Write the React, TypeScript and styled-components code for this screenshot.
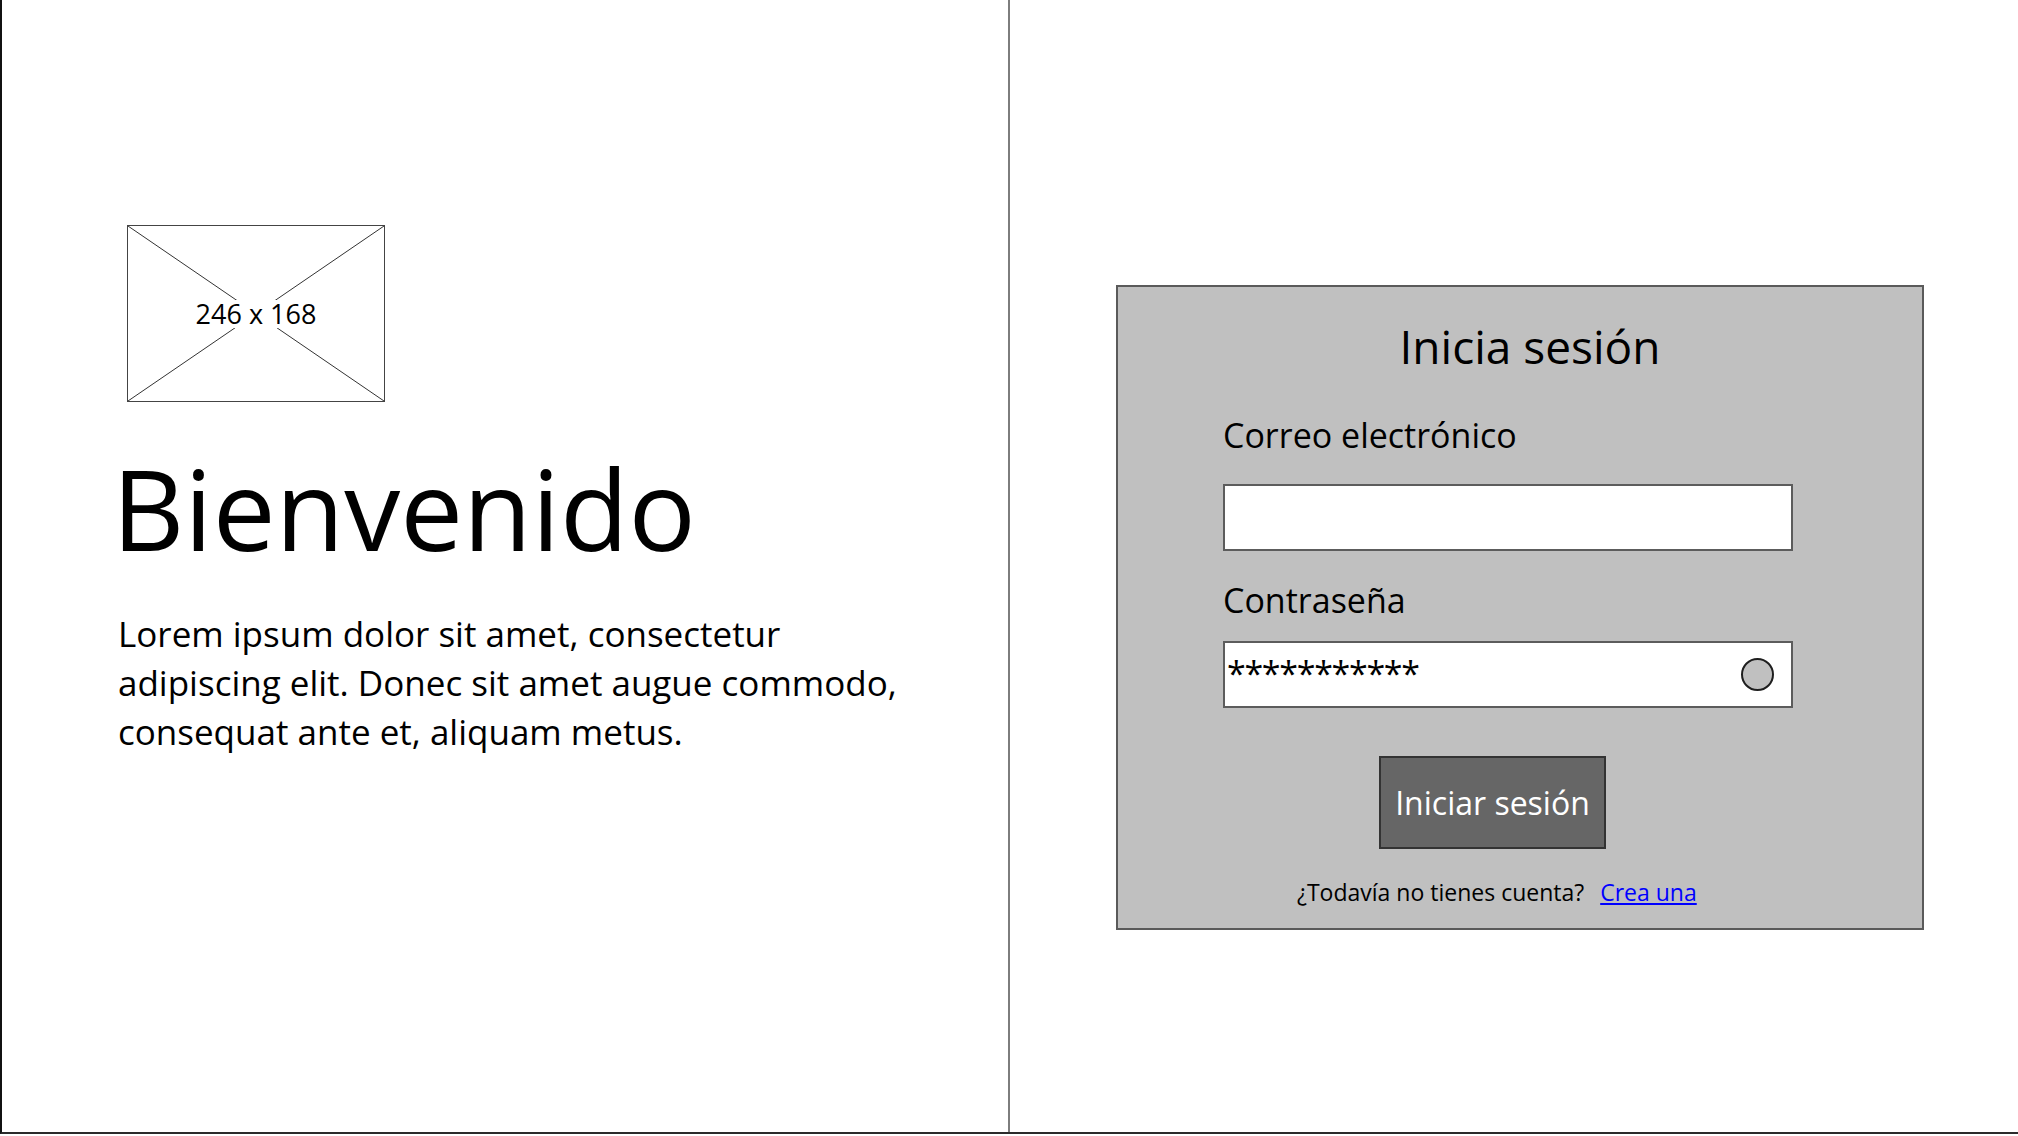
import React from "react";
import styled, { createGlobalStyle } from "styled-components";

const GlobalStyle = createGlobalStyle`
  html, body {
    margin: 0;
    padding: 0;
    background: #ffffff;
    overflow: hidden;
  }
  body {
    font-family: "Comic Sans MS", "Open Sans", "DejaVu Sans", sans-serif;
    color: #000000;
  }
`;

const Page = styled.div`
  display: flex;
  width: 2018px;
  height: 1134px;
  box-sizing: border-box;
  border-left: 2px solid #111111;
  border-bottom: 2px solid #2b2b2b;
`;

// left half: picture, greeting and blurb
const Intro = styled.section`
  flex: none;
  width: 1008px;
  box-sizing: border-box;
  border-right: 2px solid #7d7d7d;
  padding: 225px 0 0 116px;
  display: flex;
  flex-direction: column;
  align-items: flex-start;
`;

const Placeholder = styled.div`
  position: relative;
  width: 258px;
  height: 177px;
  margin-left: 9px;
  box-sizing: border-box;
  border: 1.5px solid #444444;
  display: flex;
  align-items: center;
  justify-content: center;
`;

const Cross = styled.svg`
  position: absolute;
  inset: 0;
  width: 100%;
  height: 100%;
`;

const PlaceholderLabel = styled.span`
  position: relative;
  font-size: 27px;
  line-height: 28px;
  padding: 0 2px;
  background: #ffffff;
`;

const Heading = styled.h1`
  margin: 50px 0 0 -6px;
  font-size: 112px;
  line-height: 112px;
  font-weight: 400;
`;

const Blurb = styled.p`
  margin: 45px 0 0;
  font-size: 35px;
  line-height: 49px;
`;

// right half: login card
const Aside = styled.section`
  flex: 1;
  padding: 285px 0 0 106px;
`;

const Card = styled.form`
  width: 808px;
  height: 645px;
  box-sizing: border-box;
  background: #c0c0c0;
  border: 2px solid #5a5a5a;
  padding: 32px 0 0 105px;
  display: flex;
  flex-direction: column;
  align-items: flex-start;
`;

const Title = styled.h2`
  width: 570px;
  box-sizing: border-box;
  margin: 0;
  padding-left: 44px;
  text-align: center;
  font-size: 46px;
  line-height: 54px;
  font-weight: 400;
`;

const Label = styled.label<{ $top: number }>`
  margin-top: ${(p) => p.$top}px;
  font-size: 34px;
  line-height: 40px;
`;

const Field = styled.div<{ $top: number }>`
  margin-top: ${(p) => p.$top}px;
  width: 570px;
  height: 67px;
  box-sizing: border-box;
  background: #ffffff;
  border: 2px solid #5c5c5c;
  display: flex;
  align-items: center;
  padding: 0 17px 0 2px;
`;

const Dots = styled.span`
  align-self: flex-start;
  margin-top: 13px;
  font-size: 34px;
  line-height: 34px;
  letter-spacing: -1.3px;
`;

const Eye = styled.span`
  margin-left: auto;
  width: 33px;
  height: 33px;
  box-sizing: border-box;
  border-radius: 50%;
  border: 2px solid #1e1e1e;
  background: #c0c0c0;
`;

const Submit = styled.button`
  margin: 48px 0 0 156px;
  width: 227px;
  height: 93px;
  box-sizing: border-box;
  background: #666666;
  border: 2px solid #333333;
  color: #ffffff;
  font-family: inherit;
  font-size: 32px;
  padding: 0;
  cursor: pointer;
`;

const Footer = styled.p`
  margin: 28px 0 0 74px;
  font-size: 23px;
  line-height: 30px;
`;

const SignUp = styled.a`
  margin-left: 16px;
  color: #0000ff;
  text-decoration: underline;
`;

export default function App() {
  return (
    <>
      <GlobalStyle />
      <Page>
        <Intro>
          <Placeholder>
            <Cross viewBox="0 0 100 100" preserveAspectRatio="none">
              <line x1="0" y1="0" x2="100" y2="100" stroke="#333" strokeWidth="1" vectorEffect="non-scaling-stroke" />
              <line x1="100" y1="0" x2="0" y2="100" stroke="#333" strokeWidth="1" vectorEffect="non-scaling-stroke" />
            </Cross>
            <PlaceholderLabel>246 x 168</PlaceholderLabel>
          </Placeholder>
          <Heading>Bienvenido</Heading>
          <Blurb>
            Lorem ipsum dolor sit amet, consectetur
            <br />
            adipiscing elit. Donec sit amet augue commodo,
            <br />
            consequat ante et, aliquam metus.
          </Blurb>
        </Intro>
        <Aside>
          <Card onSubmit={(e) => e.preventDefault()}>
            <Title>Inicia sesión</Title>
            <Label $top={42}>Correo electrónico</Label>
            <Field $top={29} />
            <Label $top={29}>Contraseña</Label>
            <Field $top={21}>
              <Dots>***********</Dots>
              <Eye />
            </Field>
            <Submit type="submit">Iniciar sesión</Submit>
            <Footer>
              ¿Todavía no tienes cuenta?
              <SignUp href="#">Crea una</SignUp>
            </Footer>
          </Card>
        </Aside>
      </Page>
    </>
  );
}
